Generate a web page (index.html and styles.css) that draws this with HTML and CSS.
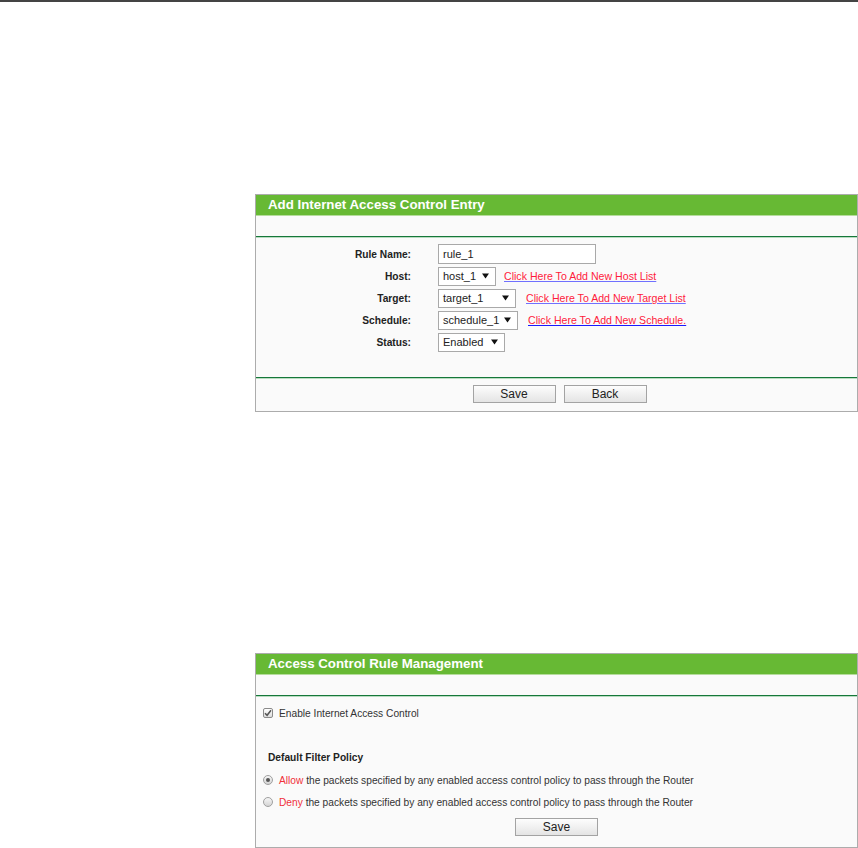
FILE: index.html
```html
<!DOCTYPE html>
<html>
<head>
<meta charset="utf-8">
<link rel="stylesheet" href="styles.css">
</head>
<body>
<div class="topline"></div>
<div class="page">
  <section class="panel panel-entry">
    <div class="panel-title">Add Internet Access Control Entry</div>
    <div class="panel-sub"></div>
    <div class="form">
      <div class="label">Rule Name:</div>
      <div class="field"><div class="textbox">rule_1</div></div>

      <div class="label">Host:</div>
      <div class="field">
        <div class="select sel-host"><span>host_1</span><svg class="arrow" width="7" height="6" viewBox="0 0 7 6"><polygon points="0,0.5 7,0.5 3.5,5.5" fill="#111"/></svg></div>
        <a class="link link-host" href="#">Click Here To Add New Host List</a>
      </div>

      <div class="label">Target:</div>
      <div class="field">
        <div class="select sel-target"><span>target_1</span><svg class="arrow" width="7" height="6" viewBox="0 0 7 6"><polygon points="0,0.5 7,0.5 3.5,5.5" fill="#111"/></svg></div>
        <a class="link link-target" href="#">Click Here To Add New Target List</a>
      </div>

      <div class="label">Schedule:</div>
      <div class="field">
        <div class="select sel-schedule"><span>schedule_1</span><svg class="arrow" width="7" height="6" viewBox="0 0 7 6"><polygon points="0,0.5 7,0.5 3.5,5.5" fill="#111"/></svg></div>
        <a class="link link-schedule" href="#">Click Here To Add New Schedule.</a>
      </div>

      <div class="label">Status:</div>
      <div class="field">
        <div class="select sel-status"><span>Enabled</span><svg class="arrow" width="7" height="6" viewBox="0 0 7 6"><polygon points="0,0.5 7,0.5 3.5,5.5" fill="#111"/></svg></div>
      </div>
    </div>
    <div class="actions actions-entry">
      <button class="btn">Save</button>
      <button class="btn">Back</button>
    </div>
  </section>

  <section class="panel panel-mgmt">
    <div class="panel-title">Access Control Rule Management</div>
    <div class="panel-sub"></div>
    <div class="mgmt">
      <div class="check-row">
        <span class="checkbox"><svg width="8" height="8" viewBox="0 0 8 8"><path d="M1 4.2 L3.1 6.3 L7 1.3" fill="none" stroke="#555" stroke-width="1.5"/></svg></span>
        <span>Enable Internet Access Control</span>
      </div>
      <div class="policy-title">Default Filter Policy</div>
      <div class="radio-row">
        <span class="radio on"></span>
        <span><span class="red">Allow</span> the packets specified by any enabled access control policy to pass through the Router</span>
      </div>
      <div class="radio-row second">
        <span class="radio"></span>
        <span><span class="red">Deny</span> the packets specified by any enabled access control policy to pass through the Router</span>
      </div>
      <div class="actions-mgmt">
        <button class="btn">Save</button>
      </div>
    </div>
  </section>
</div>
</body>
</html>
```

FILE: styles.css
```css
html, body {
  margin: 0;
  padding: 0;
  background: #ffffff;
}

body {
  font-family: "Liberation Sans", Arial, sans-serif;
  font-size: 10.2px;
  color: #333333;
}

.topline {
  height: 2px;
  background: #444444;
}

.page {
  padding-left: 255px;
  padding-top: 192px;
}

.panel {
  width: 603px;
  box-sizing: border-box;
  border: 1px solid #acacac;
  background: #fafafa;
}

.panel-mgmt {
  margin-top: 241px;
}

.panel-title {
  height: 20px;
  line-height: 20px;
  background: #67b934;
  color: #ffffff;
  font-weight: bold;
  font-size: 13.3px;
  padding-left: 12px;
  border-bottom: 1px solid #b5dc9c;
}

.panel-sub {
  height: 20px;
  border-bottom: 1px solid #16773a;
}

.form {
  border-top: 1px solid #b8dcc0;
  border-bottom: 1px solid #16773a;
  padding: 5px 0 24px 0;
  display: grid;
  grid-template-columns: 155px 1fr;
  column-gap: 27px;
  grid-auto-rows: 22px;
  align-items: center;
}

.label {
  text-align: right;
  font-weight: bold;
  color: #222222;
}

.field {
  display: flex;
  align-items: center;
}

.textbox {
  width: 158px;
  height: 20px;
  box-sizing: border-box;
  border: 1px solid #a9a9a9;
  background: #ffffff;
  font-size: 11px;
  line-height: 18px;
  padding-left: 4px;
  color: #222222;
}

.select {
  height: 19px;
  box-sizing: border-box;
  border: 1px solid #a9a9a9;
  background: #ffffff;
  display: flex;
  align-items: center;
  justify-content: space-between;
  padding: 0 6px 0 4px;
  font-size: 11px;
  color: #222222;
}

.arrow {
  display: block;
}

.sel-host { width: 58px; }
.sel-target { width: 78px; }
.sel-schedule { width: 80px; }
.sel-status { width: 67px; }

.link {
  color: #ff1a3c;
  font-size: 10.6px;
  text-decoration: underline;
  text-decoration-color: #7070ff;
  margin-left: 8px;
}

.link-target,
.link-schedule {
  margin-left: 10px;
}

.link-schedule {
  text-decoration-color: #1a1aff;
}

.actions {
  border-top: 1px solid #b8dcc0;
  padding: 6px 0 8px 6px;
  display: flex;
  justify-content: center;
  gap: 8px;
}

.btn {
  width: 83px;
  height: 18px;
  box-sizing: border-box;
  border: 1px solid #a3a3a3;
  border-radius: 0;
  background: linear-gradient(#fdfdfd, #e4e4e4);
  font-family: "Liberation Sans", Arial, sans-serif;
  font-size: 12px;
  color: #222222;
  padding: 0;
  margin: 0;
  line-height: 16px;
}

.mgmt {
  border-top: 1px solid #b8dcc0;
  padding: 8px 0 11px 0;
}

.check-row,
.radio-row {
  height: 16px;
  display: flex;
  align-items: center;
  padding-left: 7px;
  gap: 6px;
}

.checkbox {
  width: 10px;
  height: 10px;
  box-sizing: border-box;
  border: 1px solid #8a8a8a;
  border-radius: 2px;
  background: linear-gradient(#ffffff, #dcdcdc);
  display: flex;
  align-items: center;
  justify-content: center;
}

.checkbox svg {
  display: block;
}

.policy-title {
  margin-top: 29px;
  height: 16px;
  line-height: 16px;
  padding-left: 12px;
  font-weight: bold;
  color: #222222;
}

.radio-row {
  margin-top: 6px;
}

.radio-row.second {
  margin-top: 6px;
}

.radio {
  width: 10px;
  height: 10px;
  box-sizing: border-box;
  border: 1px solid #a0a0a0;
  border-radius: 50%;
  background: linear-gradient(#f6f6f6, #d4d4d4);
  display: flex;
  align-items: center;
  justify-content: center;
}

.radio.on::after {
  content: "";
  width: 4px;
  height: 4px;
  border-radius: 50%;
  background: #555555;
}

.red {
  color: #f0303a;
}

.actions-mgmt {
  margin-top: 8px;
  display: flex;
  justify-content: center;
}
```
